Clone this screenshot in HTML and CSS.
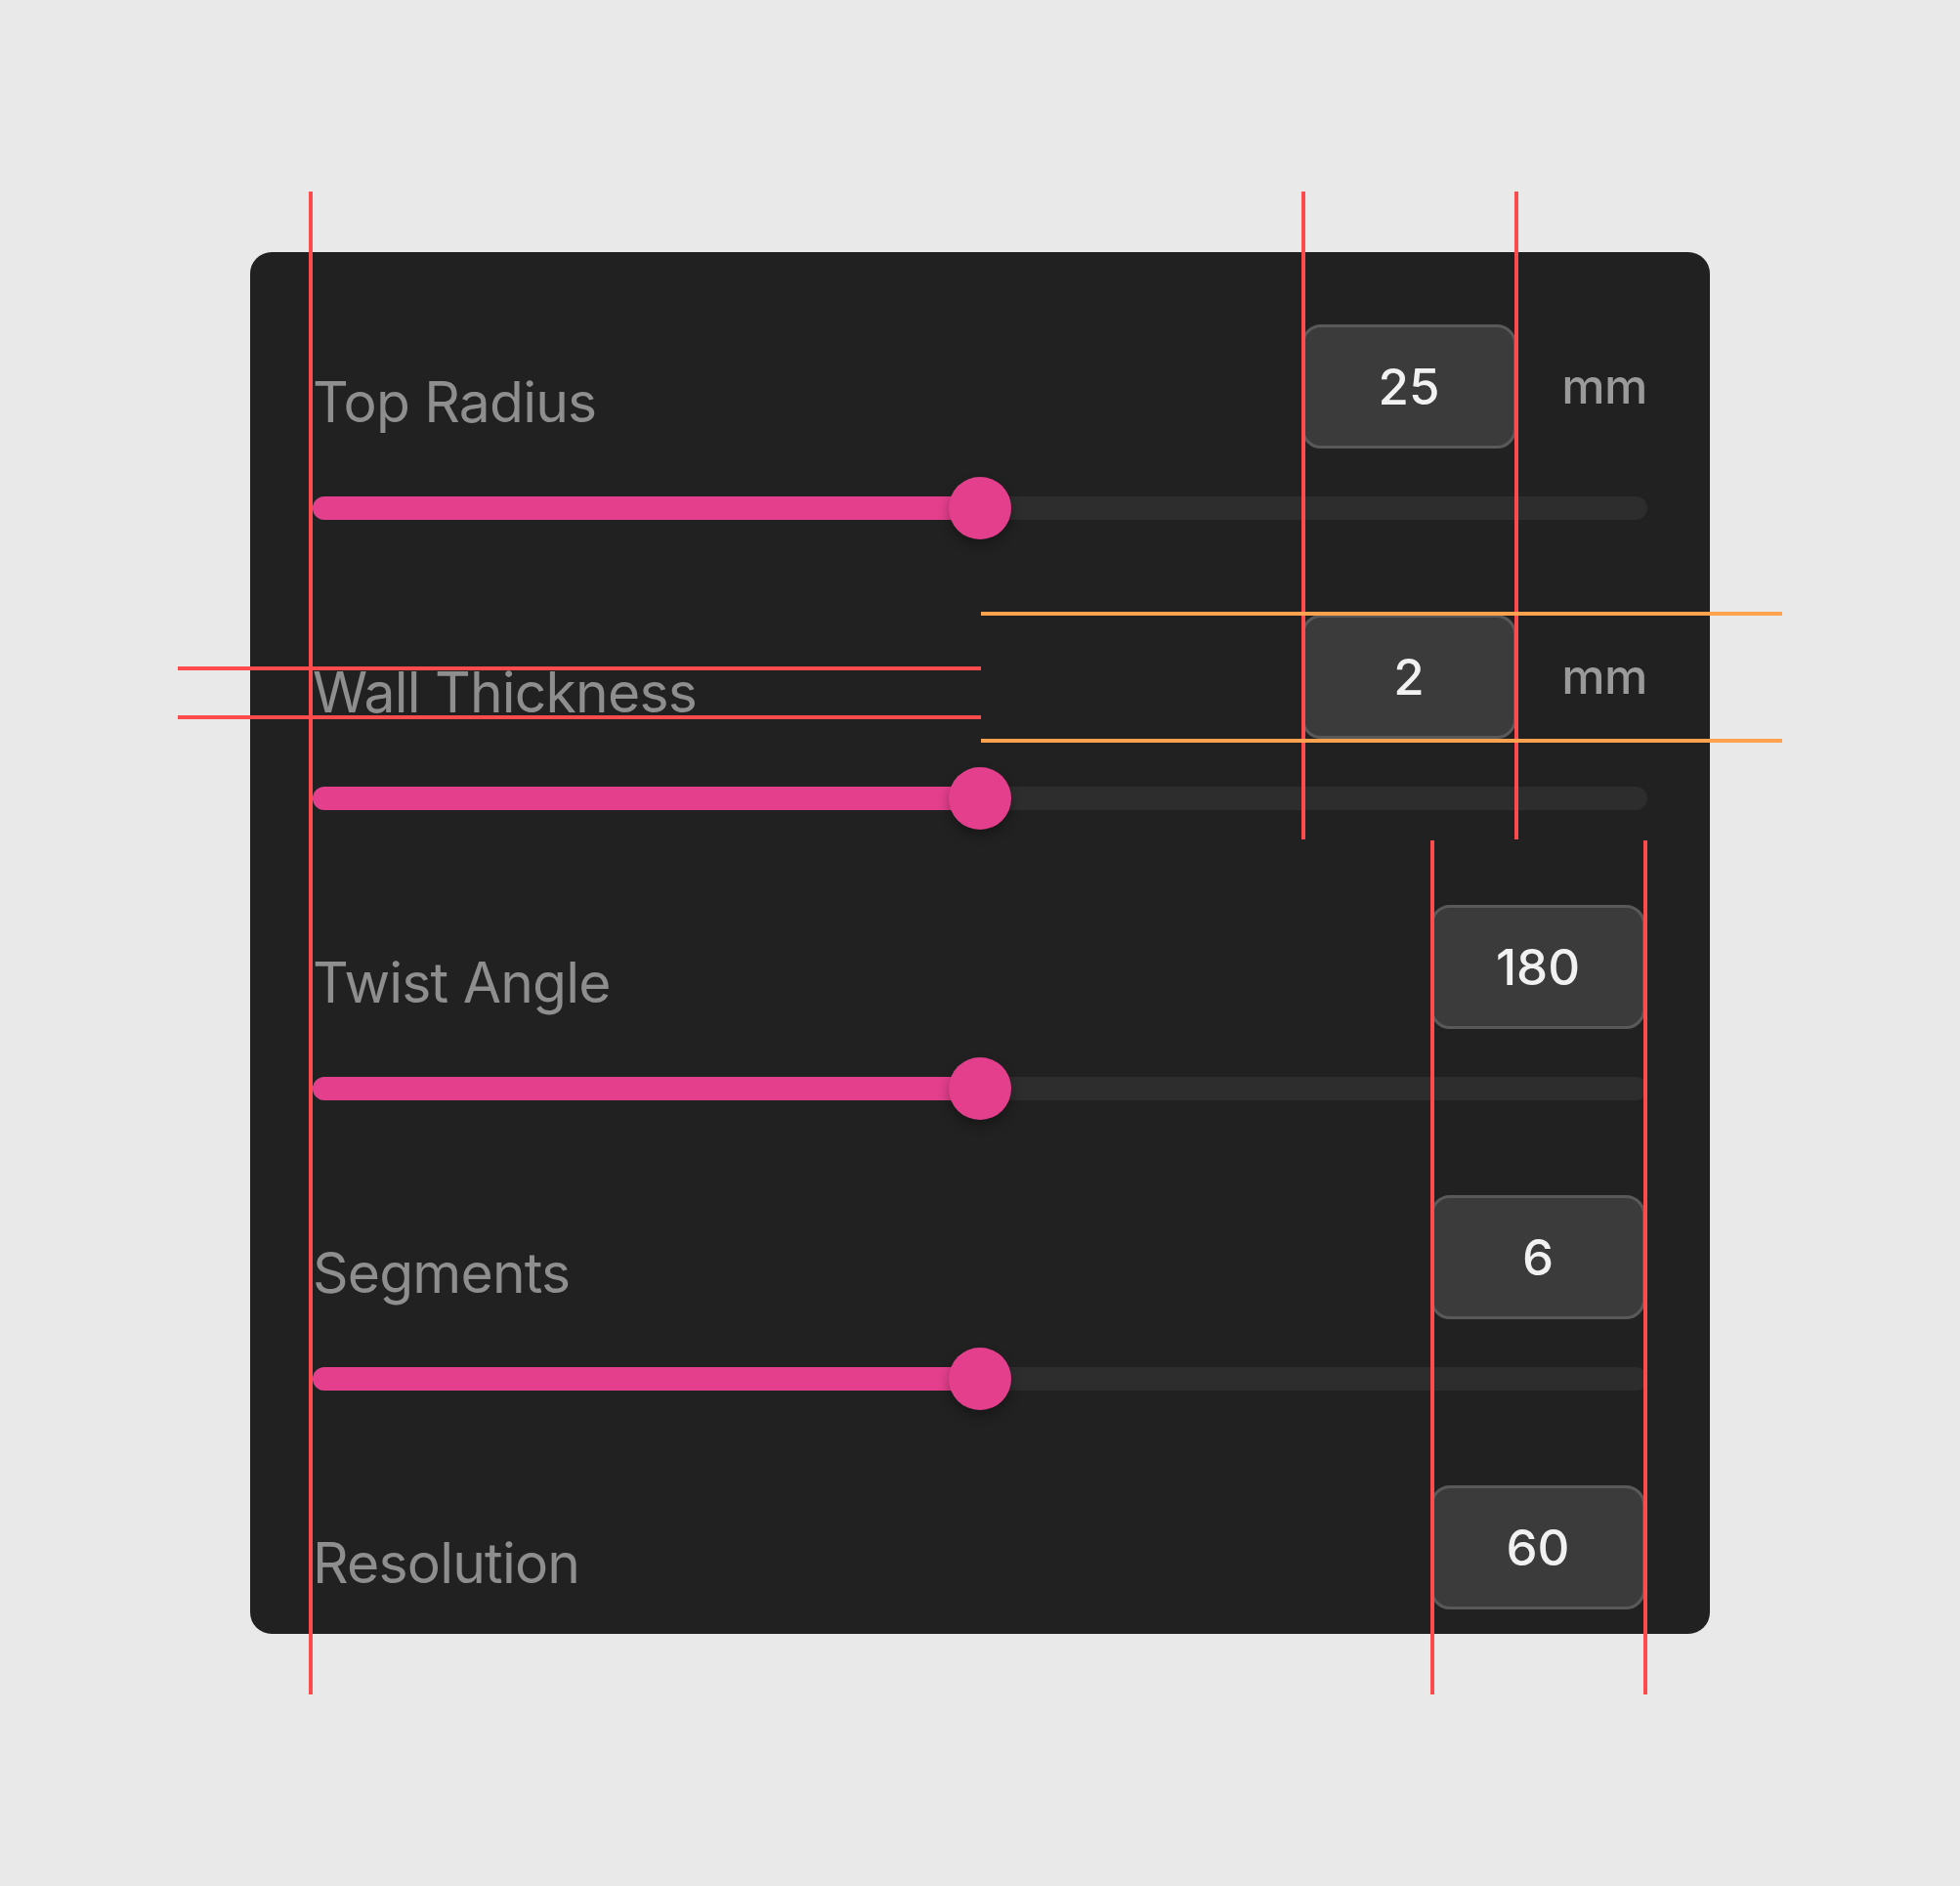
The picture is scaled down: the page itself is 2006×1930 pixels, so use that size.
FILE: index.html
```html
<!DOCTYPE html>
<html lang="en">
<head>
  <meta charset="UTF-8" />
  <meta name="viewport" content="width=device-width, initial-scale=1.0"/>
  <title>Vase Parameters</title>
  <link rel="stylesheet" href="styles.css">
</head>
<body>
  <div class="stage">
    <section class="panel">

      <div class="param">
        <div class="param-head">
          <span class="param-label">Top Radius</span>
          <div class="param-value">25</div>
          <span class="param-unit">mm</span>
        </div>
        <div class="slider">
          <div class="track"><div class="fill" style="width: 50%"><span class="thumb"></span></div></div>
        </div>
      </div>

      <div class="param">
        <div class="param-head">
          <span class="param-label">Wall Thickness</span>
          <div class="param-value">2</div>
          <span class="param-unit">mm</span>
        </div>
        <div class="slider">
          <div class="track"><div class="fill" style="width: 50%"><span class="thumb"></span></div></div>
        </div>
      </div>

      <div class="param">
        <div class="param-head">
          <span class="param-label">Twist Angle</span>
          <div class="param-value">180</div>
        </div>
        <div class="slider">
          <div class="track"><div class="fill" style="width: 50%"><span class="thumb"></span></div></div>
        </div>
      </div>

      <div class="param">
        <div class="param-head">
          <span class="param-label">Segments</span>
          <div class="param-value">6</div>
        </div>
        <div class="slider">
          <div class="track"><div class="fill" style="width: 50%"><span class="thumb"></span></div></div>
        </div>
      </div>

      <div class="param">
        <div class="param-head">
          <span class="param-label">Resolution</span>
          <div class="param-value">60</div>
        </div>
        <div class="slider">
          <div class="track"><div class="fill" style="width: 50%"><span class="thumb"></span></div></div>
        </div>
      </div>

    </section>
  </div>

  <!-- spec guides drawn over the panel -->
  <div class="guide guide-red guide-v g-left"></div>
  <div class="guide guide-red guide-v g-box-l"></div>
  <div class="guide guide-red guide-v g-box-r"></div>
  <div class="guide guide-red guide-v g-box2-l"></div>
  <div class="guide guide-red guide-v g-box2-r"></div>
  <div class="guide guide-red guide-h g-text-top"></div>
  <div class="guide guide-red guide-h g-text-base"></div>
  <div class="guide guide-orange guide-h g-box-top"></div>
  <div class="guide guide-orange guide-h g-box-bottom"></div>
</body>
</html>
```

FILE: styles.css
```css
:root {
  --fondo: #e9e9e9;
  --panel: #212121;
  --pista: #2d2d2d;
  --rosa: #e33f8c;
  --caja: #3b3b3b;
  --borde: #595959;
  --rojo: #ff4b4b;
  --naranja: #ffa24f;
}
* { box-sizing: border-box; margin: 0; padding: 0; }
body {
  position: relative;
  min-height: 1930px;
  background: var(--fondo);
  font-family: Inter, 'Noto Sans', sans-serif;
}
.stage { padding: 258px 0 0 256px; }
.panel {
  width: 1494px;
  height: 1414px;
  background: var(--panel);
  border-radius: 22px;
  padding: 74px 64px 0;
  overflow: hidden;
  display: flex;
  flex-direction: column;
  gap: 77px;
}
.param { display: flex; flex-direction: column; gap: 29px; flex-shrink: 0; }
.param-head {
  display: flex;
  align-items: center;
  height: 127px;
}
.param-label {
  flex: 1;
  font-size: 57px;
  line-height: 1;
  letter-spacing: -0.8px;
  color: #8e8e8e;
  margin-top: 32px;
}
.param-value {
  width: 220px;
  height: 127px;
  margin-right: 2px;
  background: var(--caja);
  border: 3px solid var(--borde);
  border-radius: 20px;
  display: flex;
  align-items: center;
  justify-content: center;
  font-size: 51px;
  font-weight: 500;
  color: #f1f1f1;
}
.param-unit {
  width: 132px;
  text-align: right;
  font-size: 50px;
  font-weight: 500;
  letter-spacing: -0.5px;
  color: #9a9a9a;
  margin-top: -2px;
}
.slider {
  height: 64px;
  display: flex;
  align-items: center;
}
.track {
  width: 100%;
  height: 24px;
  background: var(--pista);
  border-radius: 12px;
}
.fill {
  position: relative;
  height: 100%;
  background: var(--rosa);
  border-radius: 12px;
}
.thumb {
  position: absolute;
  right: -32px;
  top: 50%;
  width: 64px;
  height: 64px;
  margin-top: -32px;
  border-radius: 50%;
  background: var(--rosa);
  box-shadow: 0 6px 12px rgba(0, 0, 0, 0.3);
}

/* guides */
.guide { position: absolute; }
.guide-red { background: var(--rojo); }
.guide-orange { background: var(--naranja); }
.guide-v { width: 4px; }
.guide-h { height: 4px; }
.g-left { left: 316px; top: 196px; height: 1538px; }
.g-box-l { left: 1332px; top: 196px; height: 663px; }
.g-box-r { left: 1550px; top: 196px; height: 663px; }
.g-box2-l { left: 1464px; top: 860px; height: 874px; }
.g-box2-r { left: 1682px; top: 860px; height: 874px; }
.g-text-top { left: 182px; top: 682px; width: 822px; }
.g-text-base { left: 182px; top: 732px; width: 822px; }
.g-box-top { left: 1004px; top: 626px; width: 820px; }
.g-box-bottom { left: 1004px; top: 756px; width: 820px; }
```
